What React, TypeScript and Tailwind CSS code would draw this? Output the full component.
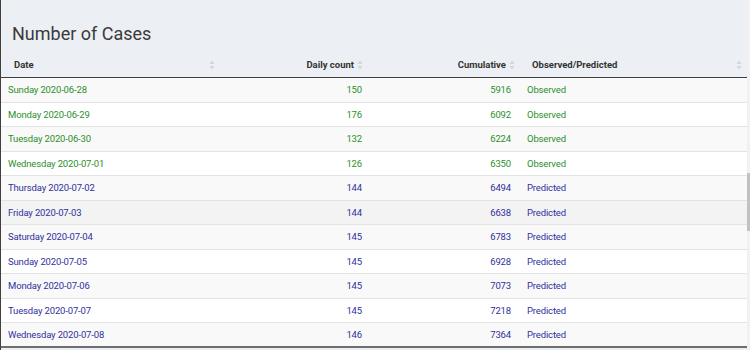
import React from 'react';

type Row = { date: string; daily: number; cum: number; kind: 'Observed' | 'Predicted' };

const rows: Row[] = [
  { date: 'Sunday 2020-06-28', daily: 150, cum: 5916, kind: 'Observed' },
  { date: 'Monday 2020-06-29', daily: 176, cum: 6092, kind: 'Observed' },
  { date: 'Tuesday 2020-06-30', daily: 132, cum: 6224, kind: 'Observed' },
  { date: 'Wednesday 2020-07-01', daily: 126, cum: 6350, kind: 'Observed' },
  { date: 'Thursday 2020-07-02', daily: 144, cum: 6494, kind: 'Predicted' },
  { date: 'Friday 2020-07-03', daily: 144, cum: 6638, kind: 'Predicted' },
  { date: 'Saturday 2020-07-04', daily: 145, cum: 6783, kind: 'Predicted' },
  { date: 'Sunday 2020-07-05', daily: 145, cum: 6928, kind: 'Predicted' },
  { date: 'Monday 2020-07-06', daily: 145, cum: 7073, kind: 'Predicted' },
  { date: 'Tuesday 2020-07-07', daily: 145, cum: 7218, kind: 'Predicted' },
  { date: 'Wednesday 2020-07-08', daily: 146, cum: 7364, kind: 'Predicted' },
];

const SortIcon: React.FC = () => (
  <svg width="6" height="10" viewBox="0 0 6 10" className="shrink-0">
    <path d="M3 0.5 L5.5 4 L0.5 4 Z" fill="#d4d6da" />
    <path d="M3 9.5 L5.5 6 L0.5 6 Z" fill="#d4d6da" />
  </svg>
);

const App: React.FC = () => {
  return (
    <div
      className="w-[750px] h-[350px] overflow-hidden flex bg-[#ecf0f5] border-l border-[#404040]"
      style={{ fontFamily: 'Roboto, "Liberation Sans", sans-serif' }}
    >
      <div className="flex-1 flex flex-col">
        {/* Title */}
        <h2 className="pt-[22px] pl-[11px] mb-[6px] text-[18px] leading-[24px] font-normal text-[#3a3a3a]">
          Number of Cases
        </h2>

        {/* Header */}
        <div className="grid grid-cols-[219px_150px_150px_1fr] h-[26px] border-b border-[#3f3f3f] text-[9.5px] font-bold text-[#333]">
          <div className="flex items-center justify-between pl-[13px] pr-[5px] pt-[1px]">
            <span>Date</span>
            <SortIcon />
          </div>
          <div className="flex items-center justify-end gap-[3px] pr-[7px] pt-[1px]">
            <span>Daily count</span>
            <SortIcon />
          </div>
          <div className="flex items-center justify-end gap-[3px] pr-[5px] pt-[1px]">
            <span>Cumulative</span>
            <SortIcon />
          </div>
          <div className="flex items-center justify-between pl-[12px] pr-[5px] pt-[1px]">
            <span>Observed/Predicted</span>
            <SortIcon />
          </div>
        </div>

        {/* Body */}
        <div className="flex flex-col text-[9.5px] tracking-[-0.15px]">
          {rows.map((r, i) => {
            const last = i === rows.length - 1;
            const bg = i === 5 ? 'bg-[#f3f3f3]' : i % 2 === 0 ? 'bg-[#f9f9f9]' : 'bg-white';
            const color = r.kind === 'Observed' ? 'text-[#2b8f2b]' : 'text-[#30309c]';
            return (
              <div
                key={r.date}
                className={`grid grid-cols-[219px_150px_150px_1fr] items-center pt-[1px] ${bg} ${color} ${
                  last ? 'h-[24.5px] border-b-2 border-[#6e6e6e]' : 'h-[24.5px] border-b border-[#e3e3e3]'
                }`}
              >
                <div className="pl-[7px]">{r.date}</div>
                <div className="text-right pr-[8px]">{r.daily}</div>
                <div className="text-right pr-[9px]">{r.cum}</div>
                <div className="pl-[7px]">{r.kind}</div>
              </div>
            );
          })}
        </div>
      </div>

      {/* Scrollbar */}
      <div className="w-[3px] h-full bg-[#f1f1f1] flex flex-col">
        <div className="h-[173px]" />
        <div className="h-[58px] bg-[#c1c1c1]" />
      </div>
    </div>
  );
};

export default App;
